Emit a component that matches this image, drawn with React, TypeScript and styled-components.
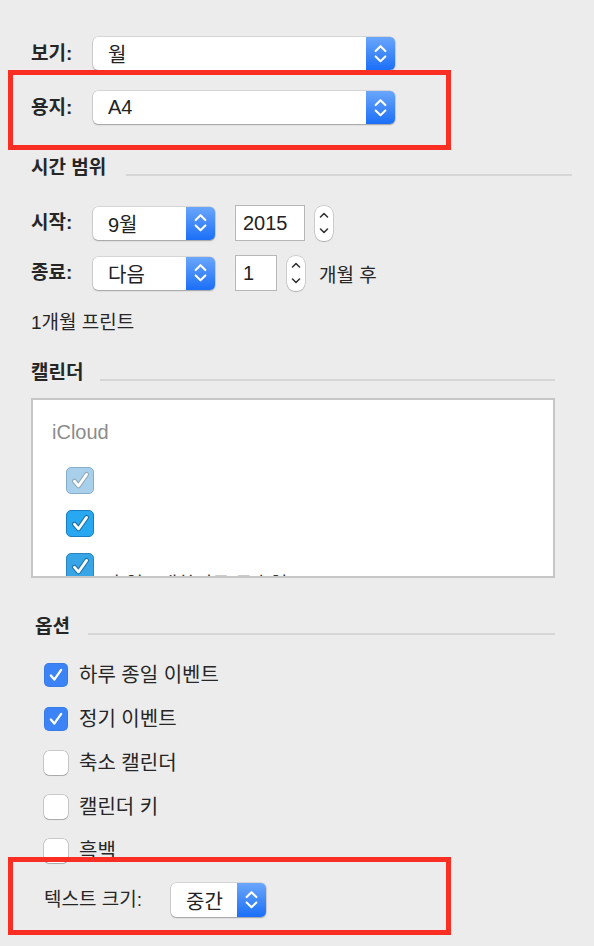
import React from "react";
import styled, { createGlobalStyle } from "styled-components";

const GlobalStyle = createGlobalStyle`
  html, body {
    margin: 0;
    padding: 0;
    background: #ececec;
  }
  body {
    font-family: "Liberation Sans", "Noto Sans CJK KR", sans-serif;
    color: #262626;
  }
`;

const Page = styled.div`
  position: relative;
  width: 594px;
  height: 946px;
  overflow: hidden;
  box-sizing: border-box;
  padding: 37px 0 0 31px;
  font-size: 20px;
`;

const Row = styled.div<{ $mt?: number; $h?: number }>`
  display: flex;
  align-items: center;
  height: ${(p) => p.$h ?? 33}px;
  margin-top: ${(p) => p.$mt ?? 0}px;
`;

const Label = styled.span<{ $w?: number }>`
  width: ${(p) => p.$w ?? 62}px;
  font-weight: 700;
  font-size: 19px;
  line-height: 24px;
  flex-shrink: 0;
`;

const PopupBox = styled.div<{ $w: number; $h?: number }>`
  display: flex;
  width: ${(p) => p.$w}px;
  height: ${(p) => p.$h ?? 33}px;
  box-sizing: border-box;
  background: #fff;
  border-radius: 5px;
  box-shadow: 0 0 0 0.5px rgba(0, 0, 0, 0.18), 0 1px 1.5px rgba(0, 0, 0, 0.25);
  overflow: hidden;
  flex-shrink: 0;
`;

const PopupText = styled.span`
  flex: 1;
  padding-left: 15px;
  display: flex;
  align-items: center;
  font-size: 20px;
  color: #222;
`;

const PopupArrows = styled.span`
  width: 29px;
  display: flex;
  align-items: center;
  justify-content: center;
  background: linear-gradient(#6aa6fb, #1b6ff8);
`;

const Field = styled.div<{ $w: number; $ml: number }>`
  width: ${(p) => p.$w}px;
  height: 36px;
  margin-left: ${(p) => p.$ml}px;
  box-sizing: border-box;
  border: 1px solid #b7b7b7;
  background: #fff;
  display: flex;
  align-items: center;
  padding-left: 7px;
  font-size: 20px;
  color: #222;
`;

const Stepper = styled.div<{ $ml: number }>`
  width: 18px;
  height: 35px;
  margin-left: ${(p) => p.$ml}px;
  box-sizing: border-box;
  border-radius: 8px;
  background: #fff;
  box-shadow: 0 0 0 0.5px rgba(0, 0, 0, 0.25), 0 1px 1px rgba(0, 0, 0, 0.15);
  display: flex;
  align-items: center;
  justify-content: center;
`;

const Suffix = styled.span`
  margin-left: 14px;
  font-size: 19px;
`;

const Plain = styled.div<{ $mt: number }>`
  margin-top: ${(p) => p.$mt}px;
  font-size: 19px;
  line-height: 24px;
`;

const SectionHead = styled.div<{ $mt: number; $lineStart: number; $lineEnd: number }>`
  display: flex;
  align-items: flex-end;
  margin-top: ${(p) => p.$mt}px;
  height: 24px;
  font-weight: 700;
  font-size: 19px;
  line-height: 24px;

  &::after {
    content: "";
    display: block;
    margin-left: auto;
    margin-bottom: 4px;
    width: ${(p) => p.$lineEnd - p.$lineStart}px;
    margin-right: ${(p) => 594 - p.$lineEnd}px;
    height: 2px;
    background: #d6d6d6;
  }
`;

const HeadText = styled.span<{ $indent?: number }>`
  padding-left: ${(p) => p.$indent ?? 0}px;
`;

const ListBox = styled.div`
  margin-top: 13px;
  width: 524px;
  height: 180px;
  box-sizing: border-box;
  border: 2px solid #c6c6c6;
  background: #fff;
  overflow: hidden;
  padding: 20px 0 0 19px;
`;

const GroupName = styled.div`
  color: #8b8b8b;
  font-size: 20px;
  line-height: 24px;
`;

const ListItems = styled.div`
  display: flex;
  flex-direction: column;
  gap: 16px;
  margin: 23px 0 0 14px;
`;

const ListItem = styled.div`
  display: flex;
  align-items: flex-start;
  height: 27px;
`;

const ListLabel = styled.span`
  margin-left: 14px;
  padding-top: 20px;
  font-size: 19px;
  line-height: 24px;
  color: #333;
  white-space: nowrap;
`;

type Tone = "faded" | "bright" | "soft";

const toneFill: Record<Tone, string> = {
  faded: "#a9d0ea",
  bright: "#28a8f0",
  soft: "#38a6e6",
};
const toneBorder: Record<Tone, string> = {
  faded: "#86aecb",
  bright: "#1a7dc0",
  soft: "#2a84bd",
};

const ListCheck = styled.span<{ $tone: Tone }>`
  width: 28px;
  height: 27px;
  box-sizing: border-box;
  border-radius: 5px;
  border: 1.5px solid ${(p) => toneBorder[p.$tone]};
  background: ${(p) => toneFill[p.$tone]};
  display: flex;
  align-items: center;
  justify-content: center;
  flex-shrink: 0;
`;

const Options = styled.div`
  display: flex;
  flex-direction: column;
  gap: 20px;
  margin: 24px 0 0 13px;
`;

const Option = styled.div`
  display: flex;
  align-items: center;
  height: 24px;
`;

const Box = styled.span<{ $on: boolean }>`
  width: 24px;
  height: 24px;
  box-sizing: border-box;
  border-radius: 5px;
  background: ${(p) => (p.$on ? "#3b83f6" : "#fff")};
  box-shadow: ${(p) =>
    p.$on
      ? "inset 0 0 0 0.5px rgba(0,0,0,0.12)"
      : "0 0 0 0.5px rgba(0,0,0,0.3), 0 1px 1px rgba(0,0,0,0.15)"};
  display: flex;
  align-items: center;
  justify-content: center;
  flex-shrink: 0;
`;

const OptionText = styled.span`
  margin-left: 11px;
  font-size: 20px;
  line-height: 24px;
`;

const SizeLabel = styled.span`
  display: block;
  width: 127px;
  margin-left: 13px;
  font-size: 19px;
  line-height: 24px;
  flex-shrink: 0;
`;

const Highlight = styled.div<{ $top: number; $h: number }>`
  position: absolute;
  left: 8px;
  top: ${(p) => p.$top}px;
  width: 443px;
  height: ${(p) => p.$h}px;
  box-sizing: border-box;
  border: 5px solid #fa2e22;
  pointer-events: none;
`;

const UpDown = ({ color = "#fff", w = 13 }: { color?: string; w?: number }) => (
  <svg width={w} height={(w * 18) / 12} viewBox="0 0 12 18" fill="none">
    <polyline points="1.5,6.5 6,2 10.5,6.5" stroke={color} strokeWidth="1.9" strokeLinecap="round" strokeLinejoin="round" />
    <polyline points="1.5,11.5 6,16 10.5,11.5" stroke={color} strokeWidth="1.9" strokeLinecap="round" strokeLinejoin="round" />
  </svg>
);

const StepArrows = () => (
  <svg width="10" height="26" viewBox="0 0 10 26" fill="none">
    <polyline points="1.5,7 5,3.5 8.5,7" stroke="#333" strokeWidth="1.6" strokeLinecap="round" strokeLinejoin="round" />
    <polyline points="1.5,19 5,22.5 8.5,19" stroke="#333" strokeWidth="1.6" strokeLinecap="round" strokeLinejoin="round" />
  </svg>
);

const Tick = ({ size = 16, outline }: { size?: number; outline?: string }) => (
  <svg width={size} height={size} viewBox="0 0 14 14" fill="none">
    {outline && (
      <polyline points="2.5,7.5 5.5,11 11.5,2.5" stroke={outline} strokeWidth="3.6" strokeLinecap="round" strokeLinejoin="round" />
    )}
    <polyline points="2.5,7.5 5.5,11 11.5,2.5" stroke="#fff" strokeWidth="2" strokeLinecap="round" strokeLinejoin="round" />
  </svg>
);

const Popup = ({ w, text, h }: { w: number; text: string; h?: number }) => (
  <PopupBox $w={w} $h={h}>
    <PopupText>{text}</PopupText>
    <PopupArrows>
      <UpDown />
    </PopupArrows>
  </PopupBox>
);

const options = [
  { label: "하루 종일 이벤트", on: true },
  { label: "정기 이벤트", on: true },
  { label: "축소 캘린더", on: false },
  { label: "캘린더 키", on: false },
  { label: "흑백", on: false },
];

export default function App() {
  return (
    <>
      <GlobalStyle />
      <Page>
        <Row>
          <Label>보기:</Label>
          <Popup w={302} text="월" />
        </Row>
        <Row $mt={21}>
          <Label>용지:</Label>
          <Popup w={302} text="A4" />
        </Row>

        <SectionHead $mt={32} $lineStart={126} $lineEnd={572}>
          <HeadText>시간 범위</HeadText>
        </SectionHead>
        <Row $mt={25} $h={36}>
          <Label>시작:</Label>
          <Popup w={122} text="9월" />
          <Field $w={70} $ml={20}>2015</Field>
          <Stepper $ml={10}>
            <StepArrows />
          </Stepper>
        </Row>
        <Row $mt={14} $h={36}>
          <Label>종료:</Label>
          <Popup w={122} text="다음" />
          <Field $w={42} $ml={20}>1</Field>
          <Stepper $ml={10}>
            <StepArrows />
          </Stepper>
          <Suffix>개월 후</Suffix>
        </Row>
        <Plain $mt={20}>1개월 프린트</Plain>

        <SectionHead $mt={26} $lineStart={100} $lineEnd={555}>
          <HeadText>캘린더</HeadText>
        </SectionHead>
        <ListBox>
          <GroupName>iCloud</GroupName>
          <ListItems>
            <ListItem>
              <ListCheck $tone="faded">
                <Tick size={19} outline="#8fa9bb" />
              </ListCheck>
            </ListItem>
            <ListItem>
              <ListCheck $tone="bright">
                <Tick size={19} outline="#1b6fa6" />
              </ListCheck>
            </ListItem>
            <ListItem>
              <ListCheck $tone="soft">
                <Tick size={19} outline="#1f74ab" />
              </ListCheck>
              <ListLabel>축일 - 대한민국 공휴일</ListLabel>
            </ListItem>
          </ListItems>
        </ListBox>

        <SectionHead $mt={37} $lineStart={88} $lineEnd={555}>
          <HeadText $indent={4}>옵션</HeadText>
        </SectionHead>
        <Options>
          {options.map((o) => (
            <Option key={o.label}>
              <Box $on={o.on}>{o.on && <Tick />}</Box>
              <OptionText>{o.label}</OptionText>
            </Option>
          ))}
        </Options>
        <Row $mt={20} $h={34}>
          <SizeLabel>텍스트 크기:</SizeLabel>
          <Popup w={95} h={34} text="중간" />
        </Row>

        <Highlight $top={70} $h={80} />
        <Highlight $top={857} $h={78} />
      </Page>
    </>
  );
}
